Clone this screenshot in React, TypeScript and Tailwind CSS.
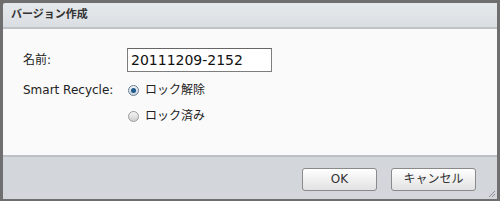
const Radio = ({ checked }: { checked: boolean }) => (
    <span
        className={`w-[11px] h-[11px] rounded-full border flex items-center justify-center ${checked ? "border-[#6a7f96] bg-gradient-to-b from-[#f4f6f8] to-[#c9d2dc]" : "border-[#9a9a9a] bg-gradient-to-b from-[#f6f6f6] to-[#cfcfcf]"}`}>
        {checked && <span className="w-[5px] h-[5px] rounded-full bg-[#1f5a8c]"></span>}
    </span>
)

const App = () => {
    return (
        <div
            className="w-[500px] h-[201px] bg-[#6f6f6f] pt-[3px] px-[3px] pb-[2px] flex flex-col text-[#222]"
            style={{fontFamily: '"DejaVu Sans", Verdana, "Noto Sans CJK JP", sans-serif'}}>
            <div className="h-[26px] bg-gradient-to-b from-[#e6e9ec] to-[#dadee2] border-b-2 border-[#bfc3c7] flex items-center pl-[8px] rounded-tl-[2px]">
                <span className="text-[11px] font-bold text-[#333]">バージョン作成</span>
            </div>
            <div className="flex-1 bg-[#fafafa] border-b-2 border-[#bcc0c4] pl-[20px] pt-[19px]">
                <div className="flex items-center h-[24px]">
                    <span className="w-[104px] text-[12px]">名前:</span>
                    <div className="w-[145px] h-[24px] border border-[#7d7d7d] border-t-[#666] bg-white flex items-center pl-[3px] text-[14px] text-[#111]">
                        20111209-2152
                    </div>
                </div>
                <div className="flex mt-[5px]">
                    <span className="w-[104px] text-[12px] leading-[26px]">Smart Recycle:</span>
                    <div className="flex flex-col">
                        <label className="flex items-center h-[26px] gap-[6px] pl-[1px] text-[12px]">
                            <Radio checked={true}/>
                            ロック解除
                        </label>
                        <label className="flex items-center h-[26px] gap-[6px] pl-[1px] text-[12px]">
                            <Radio checked={false}/>
                            ロック済み
                        </label>
                    </div>
                </div>
            </div>
            <div className="h-[42px] bg-[#d3d7db] relative flex items-center justify-end pr-[21px] gap-[14px] pt-[2px]">
                <button className="w-[75px] h-[23px] rounded-[3px] border border-[#8a8a8a] bg-gradient-to-b from-[#ffffff] to-[#e2e2e2] text-[12px] text-[#333]">OK</button>
                <button className="w-[85px] h-[23px] rounded-[3px] border border-[#8a8a8a] bg-gradient-to-b from-[#ffffff] to-[#e2e2e2] text-[12px] text-[#333]">キャンセル</button>
                <svg className="absolute right-[1px] bottom-[1px]" width="9" height="9" viewBox="0 0 9 9">
                    <line x1="8" y1="2" x2="2" y2="8" stroke="#8a8e92" strokeWidth="1"/>
                    <line x1="8" y1="5" x2="5" y2="8" stroke="#8a8e92" strokeWidth="1"/>
                </svg>
            </div>
        </div>
    );
};

export default App;
